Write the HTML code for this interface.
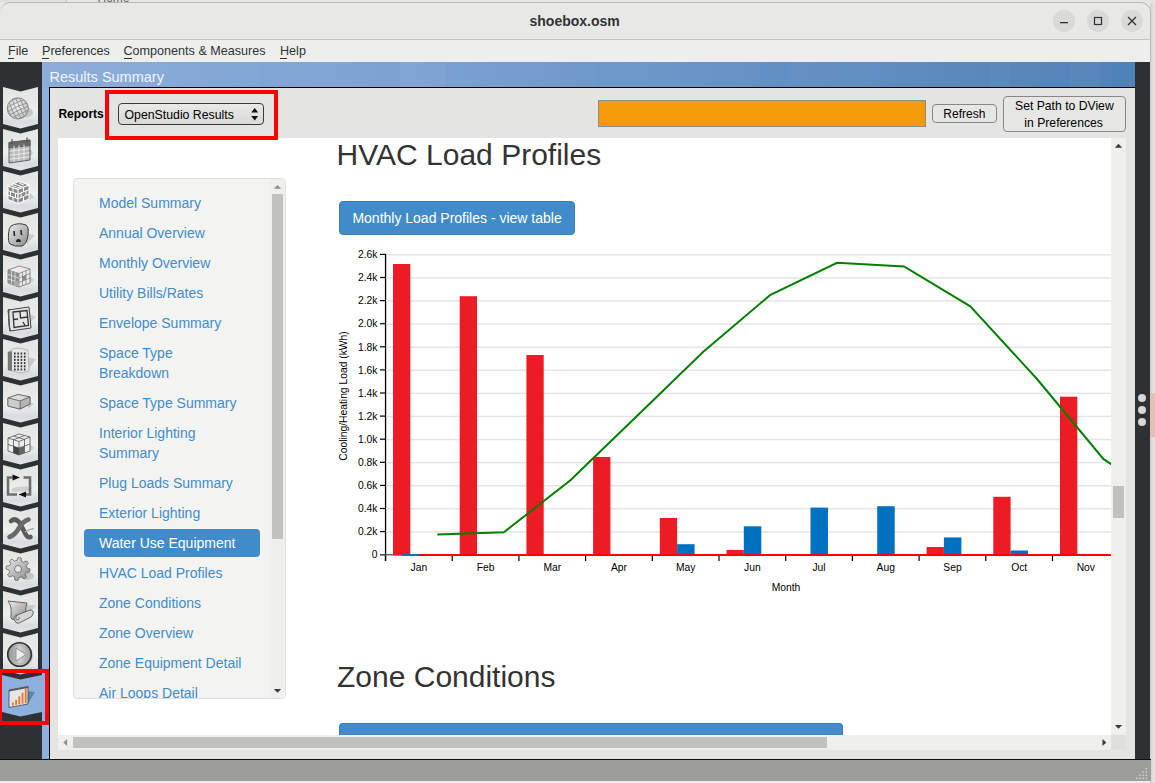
<!DOCTYPE html>
<html><head><meta charset="utf-8"><style>
html,body{margin:0;padding:0;width:1155px;height:783px;overflow:hidden;background:#ebebea}
.r{position:absolute;display:block}
.t{position:absolute;white-space:nowrap;font-family:"Liberation Sans", sans-serif}
svg text{font-family:"Liberation Sans", sans-serif}
</style></head><body>
<div class="r" style="left:0px;top:0px;width:1155px;height:783px;background:#ebebea;"></div>
<div class="r" style="left:1150px;top:0px;width:5px;height:783px;background:linear-gradient(to right,#cfcfce,#e9e9e8);"></div>
<div class="r" style="left:0px;top:0px;width:1155px;height:3px;background:#e6e6e5;"></div>
<div class="r" style="left:0px;top:0px;width:66px;height:2px;background:#e0e1df;"></div>
<div class="r" style="left:66px;top:0px;width:1px;height:2px;background:#c8c9c7;"></div>
<div class="t" style="left:97.50px;top:-8.16px;font-size:12px;line-height:12px;color:#666;font-weight:normal;">Home</div>
<div class="r" style="left:0;top:2px;width:1151px;height:38px;background:#e8e8e7;border-top:1px solid #b9b9b7;border-radius:10px 10px 0 0;box-sizing:border-box;border-right:1px solid #b9b9b7"></div>
<div class="r" style="left:0px;top:39px;width:1151px;height:1px;background:#c3c3c1;"></div>
<div class="t" style="left:529.50px;top:14.15px;font-size:14px;line-height:14px;color:#2e3436;font-weight:bold;">shoebox.osm</div>
<div class="r" style="left:1053px;top:10px;width:22px;height:22px;border-radius:50%;background:#d9dad8"></div>
<div class="r" style="left:1087px;top:10px;width:22px;height:22px;border-radius:50%;background:#d9dad8"></div>
<div class="r" style="left:1121px;top:10px;width:22px;height:22px;border-radius:50%;background:#d9dad8"></div>
<svg class="r" style="left:1050px;top:8px" width="100" height="26" viewBox="1050 8 100 26"><rect x="1060" y="22" width="8" height="1.3" fill="#2e3436"/><rect x="1094.5" y="17.5" width="7" height="7" fill="none" stroke="#2e3436" stroke-width="1.2"/><path d="M1128 17 L1136 25 M1136 17 L1128 25" stroke="#2e3436" stroke-width="1.3"/></svg>
<div class="r" style="left:0px;top:40px;width:1151px;height:22px;background:#eeeeec;"></div>
<div class="t" style="left:8.00px;top:45.33px;font-size:12.6px;line-height:12.6px;color:#2e3436;font-weight:normal;">File</div>
<div class="t" style="left:42.00px;top:45.33px;font-size:12.6px;line-height:12.6px;color:#2e3436;font-weight:normal;">Preferences</div>
<div class="t" style="left:123.50px;top:45.33px;font-size:12.6px;line-height:12.6px;color:#2e3436;font-weight:normal;">Components &amp; Measures</div>
<div class="t" style="left:280.00px;top:45.33px;font-size:12.6px;line-height:12.6px;color:#2e3436;font-weight:normal;">Help</div>
<div class="r" style="left:8px;top:57.5px;width:6px;height:1px;background:#2e3436;"></div>
<div class="r" style="left:42px;top:57.5px;width:7px;height:1px;background:#2e3436;"></div>
<div class="r" style="left:123.5px;top:57.5px;width:8px;height:1px;background:#2e3436;"></div>
<div class="r" style="left:280px;top:57.5px;width:7px;height:1px;background:#2e3436;"></div>
<div class="r" style="left:0px;top:62px;width:42px;height:697px;background:#2d3133;"></div>
<div class="r" style="left:42px;top:62px;width:7px;height:697px;background:#8db1df;"></div>
<div class="r" style="left:1135px;top:62px;width:15px;height:697px;background:#2d3133;"></div>
<div class="r" style="left:42px;top:62px;width:1093px;height:25px;background:linear-gradient(to right,#8cadd9 0%,#7ea4d4 30%,#6d97c9 55%,#5e8bc0 80%,#4f82b9 100%);"></div>
<div class="r" style="left:260px;top:62px;width:40px;height:25px;background:#7fa6d6;opacity:0.5"></div>
<div class="r" style="left:400px;top:62px;width:45px;height:25px;background:#84a9d8;opacity:0.4"></div>
<div class="r" style="left:595px;top:62px;width:40px;height:25px;background:#6d98ca;opacity:0.5"></div>
<div class="r" style="left:760px;top:62px;width:30px;height:25px;background:#5f8ec6;opacity:0.5"></div>
<div class="r" style="left:840px;top:62px;width:40px;height:25px;background:#6490c4;opacity:0.4"></div>
<div class="r" style="left:930px;top:62px;width:30px;height:25px;background:#5e89bd;opacity:0.5"></div>
<div class="r" style="left:990px;top:62px;width:20px;height:25px;background:#5a8ec4;opacity:0.5"></div>
<div class="r" style="left:1070px;top:62px;width:30px;height:25px;background:#5f8cc0;opacity:0.4"></div>
<div class="t" style="left:49.50px;top:70.03px;font-size:14.5px;line-height:14.5px;color:#f2f5fa;font-weight:normal;">Results Summary</div>
<div class="r" style="left:49px;top:87px;width:1086px;height:1px;background:#000;"></div>
<div class="r" style="left:49px;top:87px;width:1px;height:672px;background:#000;"></div>
<div class="r" style="left:50px;top:88px;width:1085px;height:671px;background:#e4e5e3;"></div>
<div class="r" style="left:0px;top:759px;width:1151px;height:1px;background:#111;"></div>
<div class="r" style="left:0px;top:760px;width:1151px;height:21px;background:#9c9e9b;"></div>
<svg class="r" style="left:1130px;top:762px" width="20" height="19" viewBox="1130 762 20 19"><rect x="1136.0" y="777.6" width="1.5" height="1.5" fill="#d0d1cf"/><rect x="1139.2" y="774.4" width="1.5" height="1.5" fill="#d0d1cf"/><rect x="1139.2" y="777.6" width="1.5" height="1.5" fill="#d0d1cf"/><rect x="1142.4" y="771.2" width="1.5" height="1.5" fill="#d0d1cf"/><rect x="1142.4" y="774.4" width="1.5" height="1.5" fill="#d0d1cf"/><rect x="1142.4" y="777.6" width="1.5" height="1.5" fill="#d0d1cf"/><rect x="1145.6" y="768.0" width="1.5" height="1.5" fill="#d0d1cf"/><rect x="1145.6" y="771.2" width="1.5" height="1.5" fill="#d0d1cf"/><rect x="1145.6" y="774.4" width="1.5" height="1.5" fill="#d0d1cf"/><rect x="1145.6" y="777.6" width="1.5" height="1.5" fill="#d0d1cf"/></svg>
<div class="t" style="left:58.40px;top:107.64px;font-size:12px;line-height:12px;color:#000;font-weight:bold;">Reports</div>
<div class="r" style="left:118px;top:103px;width:146px;height:22px;box-sizing:border-box;border:1px solid #3a3a3a;border-radius:4px;background:linear-gradient(#e9e9e7,#d9dad8)"></div>
<div class="t" style="left:124.50px;top:108.79px;font-size:12.3px;line-height:12.3px;color:#000;font-weight:normal;">OpenStudio Results</div>
<svg class="r" style="left:249px;top:106px" width="12" height="18" viewBox="249 106 12 18"><path d="M251.2 112.6 L254.7 108 L258.2 112.6 Z M251.2 116 L254.7 120.4 L258.2 116 Z" fill="#111"/></svg>
<div class="r" style="left:105px;top:90px;width:173px;height:50px;box-sizing:border-box;border:4px solid #ff0000;z-index:5"></div>
<div class="r" style="left:598px;top:100px;width:328px;height:27px;box-sizing:border-box;border:1px solid #8c8c8c;background:#f39c07"></div>
<div class="r" style="left:932px;top:104px;width:65px;height:19px;box-sizing:border-box;border:1px solid #8a8683;border-radius:4px;background:#e6e7e5"></div>
<div class="t" style="left:943.30px;top:107.84px;font-size:12px;line-height:12px;color:#000;font-weight:normal;">Refresh</div>
<div class="r" style="left:1003px;top:96px;width:123px;height:36px;box-sizing:border-box;border:1px solid #8a8683;border-radius:4px;background:#e6e7e5"></div>
<div class="t" style="left:1015.00px;top:100.17px;font-size:12.2px;line-height:12.2px;color:#000;font-weight:normal;">Set Path to DView</div>
<div class="t" style="left:1024.30px;top:116.67px;font-size:12.2px;line-height:12.2px;color:#000;font-weight:normal;">in Preferences</div>
<div class="r" style="left:58px;top:138px;width:1053px;height:597px;background:#fff;"></div>
<div class="r" style="left:73px;top:178px;width:213px;height:521px;box-sizing:border-box;border:1px solid #dfe0de;border-radius:4px;background:#f3f4f2"></div>
<div class="r" style="left:270px;top:179px;width:15px;height:519px;background:#eff0ee;"></div>
<div class="r" style="left:272px;top:194px;width:11px;height:345px;background:#c1c2bf;"></div>
<svg class="r" style="left:270px;top:180px" width="15" height="518" viewBox="270 180 15 518"><path d="M273.8 188.8 L277.5 185 L281.2 188.8 Z" fill="#8f908e"/><path d="M273.8 689 L277.5 692.8 L281.2 689 Z" fill="#3a3a3a"/></svg>
<div class="r" style="left:84px;top:529px;width:176px;height:28px;border-radius:4px;background:#428bca"></div>
<div class="r" style="left:74px;top:179px;width:196px;height:519px;overflow:hidden">
<div class="t" style="left:25px;top:17.15px;font-size:14px;line-height:14px;color:#428bca">Model Summary</div>
<div class="t" style="left:25px;top:47.15px;font-size:14px;line-height:14px;color:#428bca">Annual Overview</div>
<div class="t" style="left:25px;top:77.15px;font-size:14px;line-height:14px;color:#428bca">Monthly Overview</div>
<div class="t" style="left:25px;top:107.15px;font-size:14px;line-height:14px;color:#428bca">Utility Bills/Rates</div>
<div class="t" style="left:25px;top:137.15px;font-size:14px;line-height:14px;color:#428bca">Envelope Summary</div>
<div class="t" style="left:25px;top:167.15px;font-size:14px;line-height:14px;color:#428bca">Space Type</div>
<div class="t" style="left:25px;top:187.15px;font-size:14px;line-height:14px;color:#428bca">Breakdown</div>
<div class="t" style="left:25px;top:217.15px;font-size:14px;line-height:14px;color:#428bca">Space Type Summary</div>
<div class="t" style="left:25px;top:247.15px;font-size:14px;line-height:14px;color:#428bca">Interior Lighting</div>
<div class="t" style="left:25px;top:267.15px;font-size:14px;line-height:14px;color:#428bca">Summary</div>
<div class="t" style="left:25px;top:297.15px;font-size:14px;line-height:14px;color:#428bca">Plug Loads Summary</div>
<div class="t" style="left:25px;top:327.15px;font-size:14px;line-height:14px;color:#428bca">Exterior Lighting</div>
<div class="t" style="left:25px;top:357.15px;font-size:14px;line-height:14px;color:#fff">Water Use Equipment</div>
<div class="t" style="left:25px;top:387.15px;font-size:14px;line-height:14px;color:#428bca">HVAC Load Profiles</div>
<div class="t" style="left:25px;top:417.15px;font-size:14px;line-height:14px;color:#428bca">Zone Conditions</div>
<div class="t" style="left:25px;top:447.15px;font-size:14px;line-height:14px;color:#428bca">Zone Overview</div>
<div class="t" style="left:25px;top:477.15px;font-size:14px;line-height:14px;color:#428bca">Zone Equipment Detail</div>
<div class="t" style="left:25px;top:507.15px;font-size:14px;line-height:14px;color:#428bca">Air Loops Detail</div>
</div>
<div class="t" style="left:336.60px;top:140.00px;font-size:30px;line-height:30px;color:#333;font-weight:normal;">HVAC Load Profiles</div>
<div class="r" style="left:339px;top:201px;width:236px;height:34px;box-sizing:border-box;border:1px solid #357ebd;border-radius:4px;background:#428bca"></div>
<div class="t" style="left:352.40px;top:210.65px;font-size:14px;line-height:14px;color:#fff;font-weight:normal;">Monthly Load Profiles - view table</div>
<div class="t" style="left:337.00px;top:661.81px;font-size:30px;line-height:30px;color:#333;font-weight:normal;">Zone Conditions</div>
<div class="r" style="left:339px;top:723px;width:504px;height:12px;box-sizing:border-box;border:1px solid #357ebd;border-bottom:none;border-radius:4px 4px 0 0;background:#428bca"></div>
<svg class="r" style="left:58px;top:138px" width="1053" height="597" viewBox="58 138 1053 597"><g font-family="Liberation Sans, sans-serif" font-size="10.3" fill="#000"><rect x="380" y="554.10" width="6" height="1.2" fill="#000"/><text x="377.5" y="558.40" text-anchor="end">0</text><rect x="387" y="531.20" width="724" height="1.5" fill="#e4e5e3"/><rect x="380" y="531.00" width="6" height="1.2" fill="#000"/><text x="377.5" y="535.30" text-anchor="end">0.2k</text><rect x="387" y="508.10" width="724" height="1.5" fill="#e4e5e3"/><rect x="380" y="507.90" width="6" height="1.2" fill="#000"/><text x="377.5" y="512.20" text-anchor="end">0.4k</text><rect x="387" y="485.00" width="724" height="1.5" fill="#e4e5e3"/><rect x="380" y="484.80" width="6" height="1.2" fill="#000"/><text x="377.5" y="489.10" text-anchor="end">0.6k</text><rect x="387" y="461.90" width="724" height="1.5" fill="#e4e5e3"/><rect x="380" y="461.70" width="6" height="1.2" fill="#000"/><text x="377.5" y="466.00" text-anchor="end">0.8k</text><rect x="387" y="438.80" width="724" height="1.5" fill="#e4e5e3"/><rect x="380" y="438.60" width="6" height="1.2" fill="#000"/><text x="377.5" y="442.90" text-anchor="end">1.0k</text><rect x="387" y="415.70" width="724" height="1.5" fill="#e4e5e3"/><rect x="380" y="415.50" width="6" height="1.2" fill="#000"/><text x="377.5" y="419.80" text-anchor="end">1.2k</text><rect x="387" y="392.60" width="724" height="1.5" fill="#e4e5e3"/><rect x="380" y="392.40" width="6" height="1.2" fill="#000"/><text x="377.5" y="396.70" text-anchor="end">1.4k</text><rect x="387" y="369.50" width="724" height="1.5" fill="#e4e5e3"/><rect x="380" y="369.30" width="6" height="1.2" fill="#000"/><text x="377.5" y="373.60" text-anchor="end">1.6k</text><rect x="387" y="346.40" width="724" height="1.5" fill="#e4e5e3"/><rect x="380" y="346.20" width="6" height="1.2" fill="#000"/><text x="377.5" y="350.50" text-anchor="end">1.8k</text><rect x="387" y="323.30" width="724" height="1.5" fill="#e4e5e3"/><rect x="380" y="323.10" width="6" height="1.2" fill="#000"/><text x="377.5" y="327.40" text-anchor="end">2.0k</text><rect x="387" y="300.20" width="724" height="1.5" fill="#e4e5e3"/><rect x="380" y="300.00" width="6" height="1.2" fill="#000"/><text x="377.5" y="304.30" text-anchor="end">2.2k</text><rect x="387" y="277.10" width="724" height="1.5" fill="#e4e5e3"/><rect x="380" y="276.90" width="6" height="1.2" fill="#000"/><text x="377.5" y="281.20" text-anchor="end">2.4k</text><rect x="387" y="254.00" width="724" height="1.5" fill="#e4e5e3"/><rect x="380" y="253.80" width="6" height="1.2" fill="#000"/><text x="377.5" y="258.10" text-anchor="end">2.6k</text><rect x="384.9" y="254" width="1.3" height="307" fill="#000"/><rect x="384.90" y="555" width="1.2" height="6" fill="#000"/><text x="418.85" y="571" text-anchor="middle">Jan</text><rect x="451.60" y="555" width="1.2" height="6" fill="#000"/><text x="485.55" y="571" text-anchor="middle">Feb</text><rect x="518.30" y="555" width="1.2" height="6" fill="#000"/><text x="552.25" y="571" text-anchor="middle">Mar</text><rect x="585.00" y="555" width="1.2" height="6" fill="#000"/><text x="618.95" y="571" text-anchor="middle">Apr</text><rect x="651.70" y="555" width="1.2" height="6" fill="#000"/><text x="685.65" y="571" text-anchor="middle">May</text><rect x="718.40" y="555" width="1.2" height="6" fill="#000"/><text x="752.35" y="571" text-anchor="middle">Jun</text><rect x="785.10" y="555" width="1.2" height="6" fill="#000"/><text x="819.05" y="571" text-anchor="middle">Jul</text><rect x="851.80" y="555" width="1.2" height="6" fill="#000"/><text x="885.75" y="571" text-anchor="middle">Aug</text><rect x="918.50" y="555" width="1.2" height="6" fill="#000"/><text x="952.45" y="571" text-anchor="middle">Sep</text><rect x="985.20" y="555" width="1.2" height="6" fill="#000"/><text x="1019.15" y="571" text-anchor="middle">Oct</text><rect x="1051.90" y="555" width="1.2" height="6" fill="#000"/><text x="1085.85" y="571" text-anchor="middle">Nov</text><rect x="1118.60" y="555" width="1.2" height="6" fill="#000"/><text x="1152.55" y="571" text-anchor="middle">Dec</text><text x="786" y="591" text-anchor="middle">Month</text><text transform="translate(346.5,396) rotate(-90)" text-anchor="middle">Cooling/Heating Load (kWh)</text></g><rect x="380" y="554.1" width="40" height="1.3" fill="#555"/><rect x="393.00" y="264.00" width="17.3" height="291.50" fill="#ed1c24"/><rect x="459.70" y="296.20" width="17.3" height="259.30" fill="#ed1c24"/><rect x="526.40" y="355.00" width="17.3" height="200.50" fill="#ed1c24"/><rect x="593.10" y="457.00" width="17.3" height="98.50" fill="#ed1c24"/><rect x="659.80" y="518.00" width="17.3" height="37.50" fill="#ed1c24"/><rect x="677.10" y="544.20" width="17.5" height="11.30" fill="#0070c0"/><rect x="726.50" y="550.00" width="17.3" height="5.50" fill="#ed1c24"/><rect x="743.80" y="526.30" width="17.5" height="29.20" fill="#0070c0"/><rect x="810.50" y="507.60" width="17.5" height="47.90" fill="#0070c0"/><rect x="877.20" y="506.20" width="17.5" height="49.30" fill="#0070c0"/><rect x="926.60" y="547.00" width="17.3" height="8.50" fill="#ed1c24"/><rect x="943.90" y="537.40" width="17.5" height="18.10" fill="#0070c0"/><rect x="993.30" y="496.80" width="17.3" height="58.70" fill="#ed1c24"/><rect x="1010.60" y="550.50" width="17.5" height="5.00" fill="#0070c0"/><rect x="1060.00" y="396.70" width="17.3" height="158.80" fill="#ed1c24"/><rect x="419" y="554" width="692" height="2" fill="#f00"/><rect x="402" y="554" width="17" height="2" fill="#0070c0"/><polyline fill="none" stroke="#008000" stroke-width="2" points="437.3,534.4 503.8,532.3 570.4,480.3 637,416 703.3,351.7 770,295.2 837,262.8 904,266.5 970.3,306.3 1037,379 1103.6,459.2 1170.7,503"/></svg>
<div class="r" style="left:1111px;top:138px;width:15px;height:597px;background:#eff0ee;"></div>
<div class="r" style="left:1113px;top:486px;width:11px;height:32px;background:#c1c2bf;"></div>
<div class="r" style="left:58px;top:735px;width:1053px;height:15px;background:#eff0ee;"></div>
<div class="r" style="left:73px;top:737px;width:754px;height:11px;background:#c1c2bf;"></div>
<div class="r" style="left:1111px;top:735px;width:15px;height:15px;background:#dfe0de;"></div>
<svg class="r" style="left:58px;top:138px" width="1068" height="612" viewBox="58 138 1068 612"><path d="M1114.8 147.8 L1118.5 143.8 L1122.2 147.8 Z" fill="#3a3a3a"/><path d="M1114.8 725 L1118.5 728.8 L1122.2 725 Z" fill="#3a3a3a"/><path d="M67.2 739 L63.2 742.5 L67.2 746 Z" fill="#8f908e"/><path d="M1102.5 739 L1106.3 742.5 L1102.5 746 Z" fill="#3a3a3a"/></svg>
<div class="r" style="left:1138px;top:394.0px;width:8px;height:8px;border-radius:50%;background:#d5d7da"></div>
<div class="r" style="left:1138px;top:405.8px;width:8px;height:8px;border-radius:50%;background:#d5d7da"></div>
<div class="r" style="left:1138px;top:417.7px;width:8px;height:8px;border-radius:50%;background:#d5d7da"></div>
<div class="r" style="left:1150px;top:393px;width:5px;height:44px;background:#dfc2b5;"></div>
<div class="r" style="left:1150px;top:40px;width:1px;height:22px;background:#b9b9b7;"></div>
<svg class="r" style="left:0;top:62px" width="49" height="697" viewBox="0 62 49 697"><defs><linearGradient id="tg" x1="0" y1="0" x2="0" y2="1"><stop offset="0" stop-color="#e4e5e3"/><stop offset="0.35" stop-color="#e8e9e7"/><stop offset="0.55" stop-color="#edefed"/><stop offset="0.72" stop-color="#e3e6e6"/><stop offset="0.85" stop-color="#d9dcde"/><stop offset="1" stop-color="#e4e6e5"/></linearGradient><linearGradient id="ic" x1="0" y1="0" x2="1" y2="1"><stop offset="0" stop-color="#ececec"/><stop offset="1" stop-color="#8a8a8a"/></linearGradient><linearGradient id="ic2" x1="0" y1="0" x2="1" y2="0"><stop offset="0" stop-color="#888"/><stop offset="0.5" stop-color="#d0d0d0"/><stop offset="1" stop-color="#999"/></linearGradient><radialGradient id="gl" cx="0.45" cy="0.4" r="0.7"><stop offset="0" stop-color="#f2f2f2"/><stop offset="1" stop-color="#bdbdbd"/></radialGradient></defs><path d="M3 87 L20.5 91.5 L38 87 L38 124 L20.5 128.5 L3 124 Z" fill="url(#tg)"/><g transform="translate(0,87)"><ellipse cx="26" cy="25.5" rx="7" ry="5" fill="#c6c7c5"/><circle cx="17.8" cy="21.4" r="10.6" fill="url(#gl)" stroke="#7a7a7a" stroke-width="0.8"/><clipPath id="gc"><circle cx="17.8" cy="21.4" r="10.6"/></clipPath><g stroke="#8a8a8a" stroke-width="0.75" fill="none" clip-path="url(#gc)" transform="rotate(-25 17.8 21.4)"><path d="M5 13.399999999999999 Q17.8 9.899999999999999 30.6 13.399999999999999"/><path d="M5 16.9 Q17.8 14.274999999999999 30.6 16.9"/><path d="M5 20.4 Q17.8 18.65 30.6 20.4"/><path d="M5 23.9 Q17.8 23.025 30.6 23.9"/><path d="M5 27.4 Q17.8 27.4 30.6 27.4"/><path d="M5 30.9 Q17.8 31.775 30.6 30.9"/><path d="M9.8 8.6 Q6.300000000000001 21.4 9.8 34.2"/><path d="M13.3 8.6 Q10.675 21.4 13.3 34.2"/><path d="M16.8 8.6 Q15.05 21.4 16.8 34.2"/><path d="M20.3 8.6 Q19.425 21.4 20.3 34.2"/><path d="M23.8 8.6 Q23.8 21.4 23.8 34.2"/><path d="M27.3 8.6 Q28.175 21.4 27.3 34.2"/></g></g><path d="M3 129 L20.5 133.5 L38 129 L38 166 L20.5 170.5 L3 166 Z" fill="url(#tg)"/><g transform="translate(0,129)"><path d="M28 16 L33 24 L28 30 Z" fill="#cbccca"/><path d="M9 13.5 L30 11 L30 31 L9 34 Z" fill="#b9b9b9" stroke="#555" stroke-width="0.9"/><path d="M9 13.5 L30 11 L30 16.5 L9 19 Z" fill="#6a6a6a" stroke="#555" stroke-width="0.8"/><path d="M12 10 L12 15 M27 8.5 L27 13.5" stroke="#444" stroke-width="1.1"/><g stroke="#eeeeee" stroke-width="0.9"><path d="M9.5 22.2 L29.5 19.8"/><path d="M9.5 26.2 L29.5 23.8"/><path d="M9.5 30.2 L29.5 27.8"/><path d="M14 16.90 L14 32.80"/><path d="M19 16.30 L19 32.10"/><path d="M24 15.70 L24 31.40"/></g></g><path d="M3 171 L20.5 175.5 L38 171 L38 208 L20.5 212.5 L3 208 Z" fill="url(#tg)"/><g transform="translate(0,171)"><path d="M29 21 L34 26 L29 29 Z" fill="#cbccca"/><path d="M8 15 L19 10.5 L29 14 L29 28 L18 32.5 L8 28.5 Z" fill="#8a8a8a"/><path d="M8 15 L18 18.5 L29 14 M18 18.5 L18 32.5" stroke="#fff" stroke-width="1.1" fill="none"/><g stroke="#fff" stroke-width="1" fill="none"><path d="M8 19.6 L18 23.1 L29 18.6"/><path d="M8 24.2 L18 27.7 L29 23.2"/><path d="M13 16.8 L13 21.4 M10.5 20.5 L10.5 25.2 M15.5 22.3 L15.5 27 M13 25.9 L13 30.6"/><path d="M23.5 16.3 L23.5 20.9 M21 21.9 L21 26.5 M26 19.8 L26 24.4 M23.5 25.5 L23.5 30.2"/><path d="M13.5 12.8 L23.5 16.3 M11 14 L16.5 16.2 M19 12 L24 14.2 M16 17.6 L21.5 15.5"/></g><path d="M8 15 L19 10.5 L29 14 L29 28 L18 32.5 L8 28.5 Z" fill="none" stroke="#fff" stroke-width="1"/></g><path d="M3 213 L20.5 217.5 L38 213 L38 250 L20.5 254.5 L3 250 Z" fill="url(#tg)"/><g transform="translate(0,213)"><path d="M24 20 L35 22 L27 31 Z" fill="#cbccca"/><path d="M11 13 Q18 9 26 12 Q29 14 28 22 Q27 31 22 33 Q15 34 10 31 Q8 29 8.5 21 Q9 14 11 13 Z" fill="url(#ic)" stroke="#3a3a3a" stroke-width="1"/><path d="M14 18 L14.5 23 M21 17 L21.5 22" stroke="#222" stroke-width="1.6"/><path d="M16 29 Q16 26 18.5 26 Q21 26 21 29 Z" fill="#222"/></g><path d="M3 255 L20.5 259.5 L38 255 L38 292 L20.5 296.5 L3 292 Z" fill="url(#tg)"/><g transform="translate(0,255)"><path d="M29 20 L34 25 L29 29 Z" fill="#cbccca"/><path d="M8 15 L19 11 L30 14 L30 28 L19 32 L8 28 Z" fill="#ececec" stroke="#666" stroke-width="0.7"/><path d="M8 15 L19 18.5 L30 14 M19 18.5 L19 32 M8 19.5 L19 23 L30 18.5 M8 24 L19 27.5 L30 23 M11.5 16 L11.5 29.5 M15 17.2 L15 30.8 M22.5 17 L22.5 30.6 M26 15.6 L26 29.4" stroke="#777" stroke-width="0.7" fill="none"/><path d="M8 15 L19 18.5 L19 32 L8 28 Z" fill="#8e8e8e"/><path d="M8 19.5 L19 23 M8 24 L19 27.5 M11.5 16 L11.5 29.5 M15 17.2 L15 30.8" stroke="#eee" stroke-width="0.7" fill="none"/><path d="M15 26.3 L19 27.5 L19 32 L15 30.8 Z" fill="#666"/><path d="M22.5 21.5 L26 20.2 L26 24.6 L22.5 26 Z" fill="#888"/><path d="M15 26.3 L19 27.5 L19 32 L15 30.8 Z" fill="#aaa"/></g><path d="M3 297 L20.5 301.5 L38 297 L38 334 L20.5 338.5 L3 334 Z" fill="url(#tg)"/><g transform="translate(0,297)"><path d="M28 16 L36 20 L28 28 Z" fill="#cbccca"/><path d="M8 13 L29 10 L31 31 L10 34 Z" fill="#e4e4e4" stroke="#444" stroke-width="1"/><path d="M9 12 Q8 22 10 34" stroke="#555" stroke-width="1.4" fill="none"/><path d="M13 15 L27 13.5 L28.5 28.5 L14 30.5 Z M20 14.5 L20.5 21 L27.5 20 M14 22.5 L18 22 M23 25 L25 28.5" stroke="#333" stroke-width="1.3" fill="none"/></g><path d="M3 339 L20.5 343.5 L38 339 L38 376 L20.5 380.5 L3 376 Z" fill="url(#tg)"/><g transform="translate(0,339)"><path d="M27 18 L36 20 L29 30 Z" fill="#cbccca"/><path d="M8 13 Q14 8 19 9 L28 11 L29 32 L21 34 L8 31 Z" fill="#e6e6e6" stroke="#888" stroke-width="0.5"/><path d="M8 13 L8 31 L12 32 L12 12 Z" fill="#777"/><g fill="#333"><rect x="14.0" y="13.5" width="1.6" height="2"/><rect x="17.3" y="13.5" width="1.6" height="2"/><rect x="20.6" y="13.5" width="1.6" height="2"/><rect x="23.9" y="13.5" width="1.6" height="2"/><rect x="14.0" y="16.7" width="1.6" height="2"/><rect x="17.3" y="16.7" width="1.6" height="2"/><rect x="20.6" y="16.7" width="1.6" height="2"/><rect x="23.9" y="16.7" width="1.6" height="2"/><rect x="14.0" y="19.9" width="1.6" height="2"/><rect x="17.3" y="19.9" width="1.6" height="2"/><rect x="20.6" y="19.9" width="1.6" height="2"/><rect x="23.9" y="19.9" width="1.6" height="2"/><rect x="14.0" y="23.1" width="1.6" height="2"/><rect x="17.3" y="23.1" width="1.6" height="2"/><rect x="20.6" y="23.1" width="1.6" height="2"/><rect x="23.9" y="23.1" width="1.6" height="2"/><rect x="14.0" y="26.3" width="1.6" height="2"/><rect x="17.3" y="26.3" width="1.6" height="2"/><rect x="20.6" y="26.3" width="1.6" height="2"/><rect x="23.9" y="26.3" width="1.6" height="2"/><rect x="14.0" y="29.5" width="1.6" height="2"/><rect x="17.3" y="29.5" width="1.6" height="2"/><rect x="20.6" y="29.5" width="1.6" height="2"/><rect x="23.9" y="29.5" width="1.6" height="2"/></g></g><path d="M3 381 L20.5 385.5 L38 381 L38 418 L20.5 422.5 L3 418 Z" fill="url(#tg)"/><g transform="translate(0,381)"><path d="M27 20 L34 23 L28 28 Z" fill="#cbccca"/><path d="M8 17 L18 13.5 L30 16 L30 23 L20 28 L8 25 Z" fill="url(#ic)" stroke="#444" stroke-width="0.8"/><path d="M8 17 L20 20 L30 16 L18 13.5 Z" fill="#dcdcdc" stroke="#555" stroke-width="0.6"/><path d="M20 20 L30 16 L30 23 L20 28 Z" fill="#b4b4b4" stroke="#555" stroke-width="0.6"/><path d="M8 17 L20 20 L20 28 L8 25 Z" fill="#cdcdcd" stroke="#555" stroke-width="0.6"/></g><path d="M3 423 L20.5 427.5 L38 423 L38 460 L20.5 464.5 L3 460 Z" fill="url(#tg)"/><g transform="translate(0,423)"><path d="M29 20 L34 25 L29 29 Z" fill="#cbccca"/><path d="M8 15 L19 11 L30 14 L30 28 L19 32 L8 28 Z" fill="#eeeeee" stroke="#555" stroke-width="0.8"/><path d="M8 15 L19 18.5 L30 14 M19 18.5 L19 32 M8 21.5 L19 25 L30 21 M13.5 13 L24.5 16.5 M24.5 12.5 L13.5 16.8 M13.5 16.8 L13.5 30 M24.5 16.3 L24.5 30" stroke="#555" stroke-width="0.8" fill="none"/><path d="M13.5 23.2 L19 25 L19 32 L13.5 30 Z" fill="#444"/><path d="M19 25 L24.5 23 L24.5 30 L19 32 Z" fill="#666"/></g><path d="M3 465 L20.5 469.5 L38 465 L38 502 L20.5 506.5 L3 502 Z" fill="url(#tg)"/><g transform="translate(0,465)"><path d="M12 23 Q22 20 33 22 L30 26 L12 27 Z" fill="#cfd0ce"/><path d="M12.5 12.5 L8 12.5 L8 29.5 L17 29.5 M23.5 12.5 L30 12.5 L30 29.5 L25.5 29.5" stroke="#6e6e6e" stroke-width="2.6" fill="none"/><path d="M12.5 9.6 L20 12.5 L12.5 15.4 Z M26 26.6 L18.5 29.5 L26 32.4 Z" fill="#111"/></g><path d="M3 507 L20.5 511.5 L38 507 L38 544 L20.5 548.5 L3 544 Z" fill="url(#tg)"/><g transform="translate(0,507)"><path d="M11 14 Q15 10.5 19 15 Q23 22 26 28 Q28 31 30.5 30" stroke="#5a5a5a" stroke-width="4.6" fill="none" stroke-linecap="round"/><path d="M28.5 12.5 Q23 14 19 21 Q15 28 9.5 30" stroke="#6a6a6a" stroke-width="4.6" fill="none" stroke-linecap="round"/><path d="M25 25 Q29 22 34 21.5" stroke="#a8a8a8" stroke-width="1.4" fill="none"/></g><path d="M3 549 L20.5 553.5 L38 549 L38 586 L20.5 590.5 L3 586 Z" fill="url(#tg)"/><g transform="translate(0,549)"><ellipse cx="27" cy="27" rx="7" ry="4" fill="#c5c6c4"/><polygon points="30.00,20.00 29.90,21.49 29.59,22.95 26.31,23.27 25.79,24.27 25.14,25.20 26.49,28.06 25.31,29.04 24.00,29.87 21.44,27.90 20.33,28.26 19.17,28.48 18.00,31.40 16.43,31.30 14.89,31.01 14.56,27.90 13.50,27.40 12.52,26.78 9.51,28.06 8.48,26.94 7.61,25.70 9.69,23.27 9.31,22.21 9.08,21.12 6.00,20.00 6.10,18.51 6.41,17.05 9.69,16.73 10.21,15.72 10.86,14.80 9.51,11.94 10.69,10.96 12.00,10.13 14.56,12.10 15.67,11.74 16.83,11.52 18.00,8.60 19.57,8.70 21.11,8.99 21.44,12.10 22.50,12.60 23.48,13.22 26.49,11.94 27.52,13.06 28.39,14.30 26.31,16.73 26.69,17.79 26.92,18.88" fill="url(#ic)" stroke="#555" stroke-width="0.7"/><circle cx="18" cy="20" r="3.5" fill="#e8e8e8" stroke="#555" stroke-width="0.7"/></g><path d="M3 591 L20.5 595.5 L38 591 L38 628 L20.5 632.5 L3 628 Z" fill="url(#tg)"/><g transform="translate(0,591)"><path d="M24 14 L36 14 L27 26 Z" fill="#cbccca"/><path d="M8 10 L27 12 Q25 17 26 24 L16 28 Q10 30 11 24 Q12 15 8 10 Z" fill="url(#ic)" stroke="#444" stroke-width="0.8"/><path d="M15 30 Q12 26 17 24 L30 19 Q34 19 33 23 Q32 26 29 27 L19 32 Q16 33 15 30 Z" fill="#d5d5d5" stroke="#444" stroke-width="0.8"/><path d="M17 24 Q14 29 18 29 Q20 28 19 26" stroke="#444" stroke-width="0.8" fill="none"/></g><path d="M3 633 L20.5 637.5 L38 633 L38 670 L20.5 674.5 L3 670 Z" fill="url(#tg)"/><g transform="translate(0,633)"><circle cx="22" cy="23" r="11" fill="#c5c6c4"/><circle cx="19.5" cy="21.5" r="11.8" fill="url(#ic2)" stroke="#333" stroke-width="1.6"/><circle cx="19.5" cy="21.5" r="9.5" fill="none" stroke="#aaa" stroke-width="0.8"/><path d="M16 15 L26 21.5 L16 28 Z" fill="#eeeeee" stroke="#777" stroke-width="0.7"/></g><path d="M2 675 L20.5 679.5 L42 675 L42 712 L20.5 716.5 L2 712 Z" fill="#8db1df"/><g transform="translate(0,675)"><path d="M26 16 L35 17 L28 29 Z" fill="#5f80ab"/><path d="M9 15 L28 11.5 L28 29 L9 32.5 Z" fill="#e6e6e6" stroke="#444" stroke-width="0.8"/><path d="M9 15 L28 11.5 L28 13 L9 16.5 Z" fill="#555"/><rect x="12.0" y="27.5" width="1.8" height="3" fill="#e5732a"/><rect x="15.2" y="24.9" width="1.8" height="5" fill="#e5732a"/><rect x="18.4" y="21.3" width="1.8" height="8" fill="#e5732a"/><rect x="21.6" y="17.7" width="1.8" height="11" fill="#e5732a"/><rect x="24.8" y="13.1" width="1.8" height="15" fill="#e5732a"/></g></svg>
<div class="r" style="left:-2px;top:669px;width:51px;height:56px;box-sizing:border-box;border:4px solid #ff0000;z-index:6"></div>
</body></html>
